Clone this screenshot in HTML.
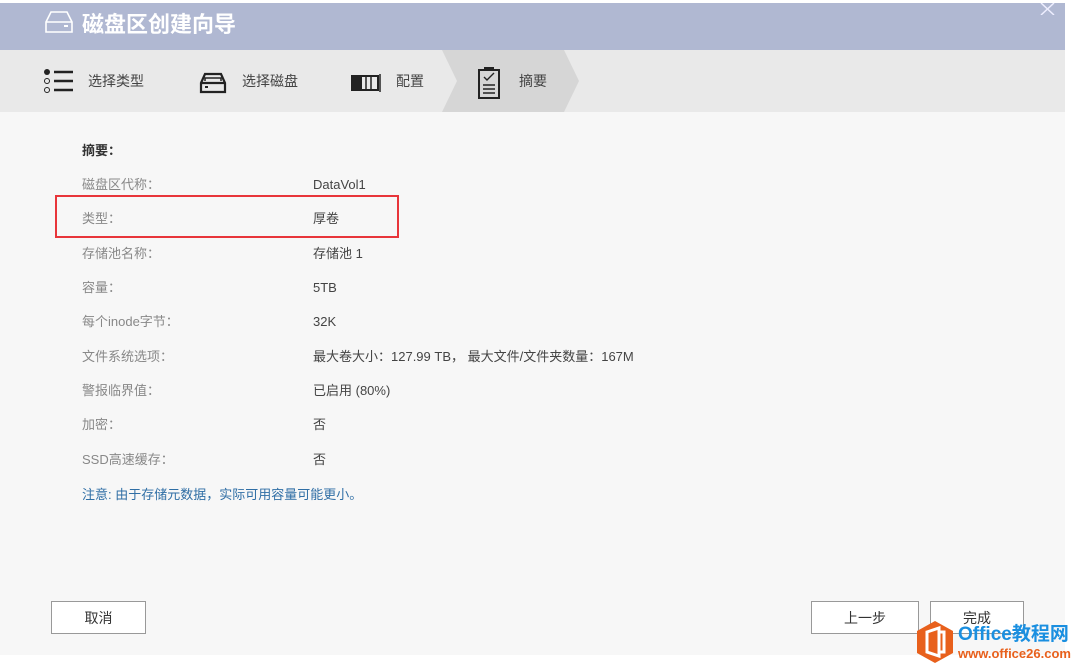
<!DOCTYPE html>
<html><head><meta charset="utf-8"><style>
body{margin:0;width:1080px;height:670px;background:#fff;position:relative;overflow:hidden;font-family:"Liberation Sans","Noto Sans CJK SC",sans-serif;}
#dlg{position:absolute;left:0;top:3px;width:1065px;height:652px;background:#f7f7f7;}
#hdr{position:absolute;left:0;top:0;width:1065px;height:47px;background:#b0b8d2;}
#hdr .t{position:absolute;left:82px;top:4px;font-size:22px;font-weight:bold;color:#fff;}
#steps{position:absolute;left:0;top:47px;width:1065px;height:62px;background:#e9e9e9;}
.s{position:absolute;top:21px;font-size:14px;color:#444;line-height:20px}
.r,.v{position:absolute;font-size:13px;line-height:20px;white-space:nowrap}
.r{color:#888;left:82px}
.v{color:#444;left:313px;}
.btn{position:absolute;height:33px;border:1px solid #999;background:#fff;font-size:14px;color:#333;text-align:center;line-height:33px;box-sizing:border-box;}
</style></head><body>
<div id="dlg">
<div id="hdr">
<svg style="position:absolute;left:44px;top:7px" width="30" height="24" viewBox="0 0 30 24"><path d="M2 12 L7 2 H23 L28 12 V22 H2 Z M2 12 H28" fill="none" stroke="#fff" stroke-width="1.6"/><rect x="20" y="15" width="4" height="2" fill="#fff"/></svg>
<div class="t">磁盘区创建向导</div>
<svg style="position:absolute;left:1040px;top:0px" width="16" height="12"><path d="M1 0 L14 12 M14 0 L1 12" stroke="#eef" stroke-width="1.5"/></svg>
</div>
<div id="steps">
<svg style="position:absolute;left:442px;top:0" width="140" height="62"><polygon points="0,0 122,0 137,31 122,62 0,62 15,31" fill="#d6d6d6"/></svg>
<svg style="position:absolute;left:43px;top:18px" width="32" height="28"><circle cx="4" cy="4" r="3" fill="#222"/><circle cx="4" cy="13" r="2.5" fill="none" stroke="#222"/><circle cx="4" cy="22" r="2.5" fill="none" stroke="#222"/><path d="M11 4 H30 M11 13 H30 M11 22 H30" stroke="#222" stroke-width="2.4"/></svg>
<div class="s" style="left:88px">选择类型</div>
<svg style="position:absolute;left:199px;top:22px" width="28" height="22"><path d="M2 11 L6 2 H22 L26 11 V20 H2 Z M2 11 H26" fill="none" stroke="#222" stroke-width="2.2"/><path d="M6 9 V6 H22 V9" fill="none" stroke="#222" stroke-width="1.5"/><rect x="6" y="14" width="3" height="2" fill="#222"/></svg>
<div class="s" style="left:242px">选择磁盘</div>
<svg style="position:absolute;left:351px;top:24px" width="32" height="18"><rect x="1" y="2" width="26" height="14" fill="none" stroke="#222" stroke-width="2"/><rect x="1" y="2" width="10" height="14" fill="#222"/><path d="M15 2V16 M20 2V16 M29 0V18" stroke="#222" stroke-width="1.5"/></svg>
<div class="s" style="left:396px">配置</div>
<svg style="position:absolute;left:477px;top:17px" width="24" height="32"><rect x="2" y="3" width="20" height="28" fill="none" stroke="#222" stroke-width="2"/><rect x="7" y="0" width="10" height="4" fill="#222"/><path d="M7 10 L10 13 L17 6 M6 18H18 M6 22H18 M6 26H18" fill="none" stroke="#222" stroke-width="1.4"/></svg>
<div class="s" style="left:519px">摘要</div>
</div>
<div class="r" style="top:138px;font-weight:bold;color:#333">摘要：</div>
<div class="r" style="top:172px">磁盘区代称：</div><div class="v" style="top:172px">DataVol1</div>
<div class="r" style="top:206px">类型：</div><div class="v" style="top:206px">厚卷</div>
<div class="r" style="top:241px">存储池名称：</div><div class="v" style="top:241px">存储池 1</div>
<div class="r" style="top:275px">容量：</div><div class="v" style="top:275px">5TB</div>
<div class="r" style="top:309px">每个inode字节：</div><div class="v" style="top:309px">32K</div>
<div class="r" style="top:344px">文件系统选项：</div><div class="v" style="top:344px">最大卷大小：127.99 TB， 最大文件/文件夹数量：167M</div>
<div class="r" style="top:378px">警报临界值：</div><div class="v" style="top:378px">已启用 (80%)</div>
<div class="r" style="top:412px">加密：</div><div class="v" style="top:412px">否</div>
<div class="r" style="top:447px">SSD高速缓存：</div><div class="v" style="top:447px">否</div>
<div class="r" style="top:482px;color:#2f6ea5">注意: 由于存储元数据，实际可用容量可能更小。</div>
<div style="position:absolute;left:55px;top:192px;width:344px;height:43px;border:2px solid #e8353a;box-sizing:border-box"></div>
<div class="btn" style="left:51px;top:598px;width:95px">取消</div>
<div class="btn" style="left:811px;top:598px;width:108px">上一步</div>
<div class="btn" style="left:930px;top:598px;width:94px">完成</div>
</div>
<svg style="position:absolute;left:915px;top:620px" width="40" height="44" viewBox="0 0 40 44"><polygon points="20,1 38,11 38,33 20,43 2,33 2,11" fill="#e8601c"/><path d="M12 12 L24 8 V36 L12 32 Z M24 12 H29 V32 H24" fill="none" stroke="#fff" stroke-width="3"/></svg>
<div style="position:absolute;left:958px;top:624px;font-size:19px;font-weight:bold;color:#1a8fe0;line-height:22px;white-space:nowrap">Office教程网</div>
<div style="position:absolute;left:958px;top:646px;font-size:13px;font-weight:bold;color:#e8601c;line-height:16px;white-space:nowrap">www.office26.com</div>
</body></html>
